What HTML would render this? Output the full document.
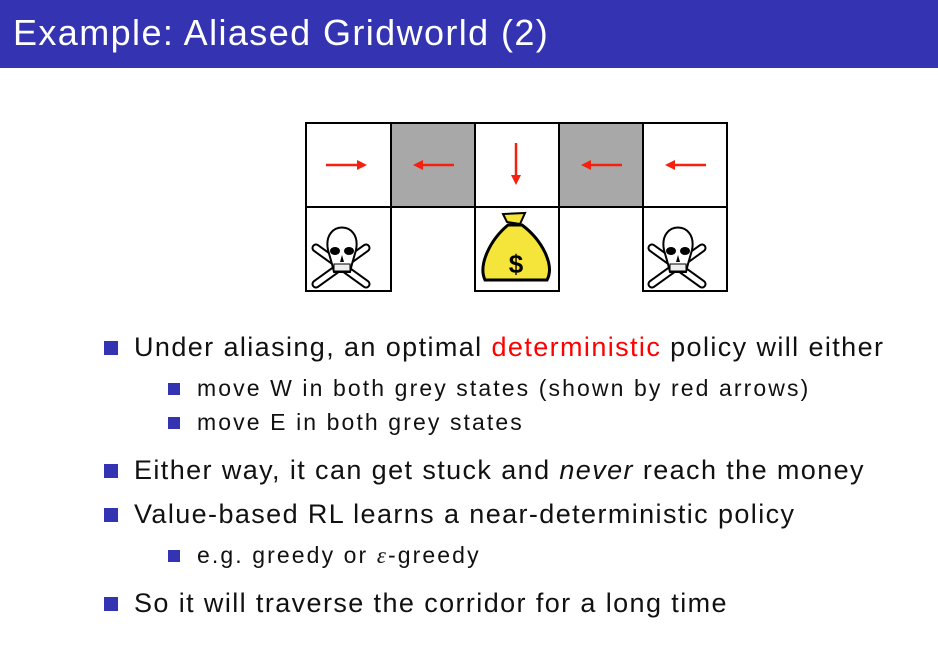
<!DOCTYPE html>
<html><head><style>
body{margin:0;width:938px;height:663px;background:#fff;position:relative;overflow:hidden;font-family:"Liberation Sans","DejaVu Sans",sans-serif;color:#111}
.hdr{position:absolute;left:0;top:0;width:938px;height:68px;background:#3434b2}
.hdr span{position:absolute;left:13px;top:12px;color:#fff;font-size:36px;letter-spacing:1.4px;white-space:nowrap}
.l{position:absolute;white-space:nowrap;line-height:1}
.b1{font-size:27px;left:134px;letter-spacing:1.4px}
.b2{font-size:23px;left:197px;letter-spacing:2.1px}
.sq{position:absolute;background:#3434b2}
.red{color:#f00}
</style></head><body>
<div class="hdr"><span>Example: Aliased Gridworld (2)</span></div>
<svg style="position:absolute;left:0;top:0" width="938" height="320">
<defs><marker id="a" markerWidth="4" markerHeight="4" refX="2" refY="2" orient="auto"><path d="M0,0L4,2L0,4z" fill="#f52010"/></marker></defs>
<rect x="391" y="123" width="84" height="84" fill="#a8a8a8"/>
<rect x="559" y="123" width="84" height="84" fill="#a8a8a8"/>
<g stroke="#000" stroke-width="2" fill="none">
<rect x="306" y="123" width="421" height="84"/>
<line x1="391" y1="123" x2="391" y2="207"/><line x1="475" y1="123" x2="475" y2="291"/>
<line x1="559" y1="123" x2="559" y2="291"/><line x1="643" y1="123" x2="643" y2="291"/>
<rect x="306" y="207" width="85" height="84"/><rect x="475" y="207" width="84" height="84"/><rect x="643" y="207" width="84" height="84"/>
</g>
<g stroke="#f52010" stroke-width="2.5" marker-end="url(#a)">
<line x1="326" y1="165" x2="362" y2="165"/>
<line x1="454" y1="165" x2="418" y2="165"/>
<line x1="516" y1="143" x2="516" y2="180"/>
<line x1="622" y1="165" x2="586" y2="165"/>
<line x1="706" y1="165" x2="670" y2="165"/>
</g>
<g id="sk">
<path d="M316,248 L366,284 M366,248 L316,284" stroke-width="9" stroke="#000" stroke-linecap="round"/>
<path d="M316,248 L366,284 M366,248 L316,284" stroke-width="5" stroke="#fff" stroke-linecap="round"/>
<path d="M328,250 C322,220 362,220 356,250 L352,264 L350,272 L334,272 L332,264 Z" fill="#fff" stroke="#000" stroke-width="2"/>
<ellipse cx="335" cy="251" rx="5" ry="4" fill="#000"/><ellipse cx="349" cy="251" rx="5" ry="4" fill="#000"/>
<path d="M342,255 L340,262 L344,262 Z" fill="#000"/>
<rect x="334" y="264" width="16" height="7" fill="#eee" stroke="#000" stroke-width="1"/>
</g>
<use href="#sk" x="336"/>
<path d="M507,222 L503,214 L525,213 L520,224 Z" fill="#f5e43a" stroke="#000" stroke-width="2"/>
<path d="M508,225 C490,240 478,265 485,280 L547,280 C555,265 542,240 522,225 Z" fill="#f5e43a" stroke="#000" stroke-width="3"/>
<text x="516" y="273" font-size="26" font-weight="bold" text-anchor="middle" font-family="Liberation Sans">$</text>
</svg>
<div class="sq" style="left:104px;top:341px;width:14px;height:14px"></div>
<div class="l b1" style="top:334px">Under aliasing, an optimal <span class="red">deterministic</span> policy will either</div>
<div class="sq" style="left:168px;top:383px;width:12px;height:12px"></div>
<div class="l b2" style="top:377px">move W in both grey states (shown by red arrows)</div>
<div class="sq" style="left:168px;top:417px;width:12px;height:12px"></div>
<div class="l b2" style="top:411px">move E in both grey states</div>
<div class="sq" style="left:104px;top:464px;width:14px;height:14px"></div>
<div class="l b1" style="top:457px">Either way, it can get stuck and <i>never</i> reach the money</div>
<div class="sq" style="left:104px;top:508px;width:14px;height:14px"></div>
<div class="l b1" style="top:501px">Value-based RL learns a near-deterministic policy</div>
<div class="sq" style="left:168px;top:550px;width:12px;height:12px"></div>
<div class="l b2" style="top:544px">e.g. greedy or <span style="font-family:'Liberation Serif',serif;font-style:italic">ε</span>-greedy</div>
<div class="sq" style="left:104px;top:597px;width:14px;height:14px"></div>
<div class="l b1" style="top:590px">So it will traverse the corridor for a long time</div>
</body></html>
